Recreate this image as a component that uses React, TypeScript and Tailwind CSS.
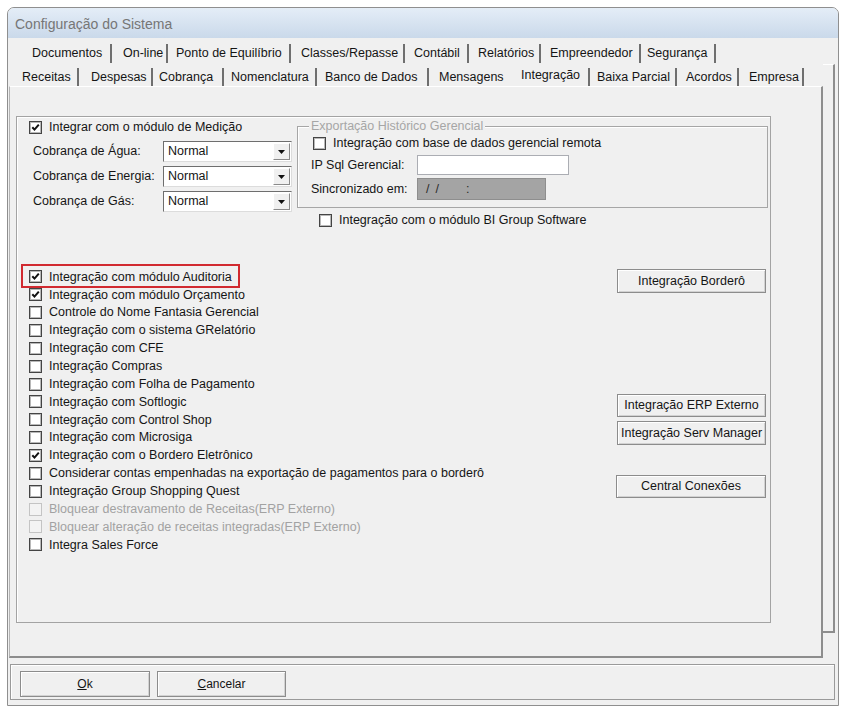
import clsx from 'clsx';

type Tab = { label: string; cls: string; sep?: boolean; active?: boolean };

const row1: Tab[] = [
  { label: 'Documentos', cls: 'w-[92px] pl-[12px]', sep: true },
  { label: 'On-line', cls: 'w-[56px] pl-[11px]', sep: true },
  { label: 'Ponto de Equilíbrio', cls: 'w-[123px] pl-[8px]', sep: true },
  { label: 'Classes/Repasse', cls: 'w-[114px] pl-[10px]', sep: true },
  { label: 'Contábil', cls: 'w-[64px] pl-[9px]', sep: true },
  { label: 'Relatórios', cls: 'w-[72px] pl-[9px]', sep: true },
  { label: 'Empreendedor', cls: 'w-[100px] pl-[9px]', sep: true },
  { label: 'Segurança', cls: 'w-[75px] pl-[6px]', sep: true },
];

const row2: Tab[] = [
  { label: 'Receitas', cls: 'w-[67px] pl-[10px]', sep: true },
  { label: 'Despesas', cls: 'w-[74px] pl-[12px]', sep: true },
  { label: 'Cobrança', cls: 'w-[71px] pl-[6px]', sep: true },
  { label: 'Nomenclatura', cls: 'w-[93px] pl-[7px]', sep: true },
  { label: 'Banco de Dados', cls: 'w-[112px] pl-[8px]', sep: true },
  { label: 'Mensagens', cls: 'w-[83px] pl-[10px]' },
  { label: 'Integração', cls: 'w-[78px] pl-[9px]', sep: true, active: true },
  { label: 'Baixa Parcial', cls: 'w-[87px] pl-[7px]', sep: true },
  { label: 'Acordos', cls: 'w-[62px] pl-[9px]', sep: true },
  { label: 'Empresa', cls: 'w-[65px] pl-[10px]', sep: true },
];

const options: { label: string; checked?: boolean; disabled?: boolean }[] = [
  { label: 'Integração com módulo Auditoria', checked: true },
  { label: 'Integração com módulo Orçamento', checked: true },
  { label: 'Controle do Nome Fantasia Gerencial' },
  { label: 'Integração com o sistema GRelatório' },
  { label: 'Integração com CFE' },
  { label: 'Integração Compras' },
  { label: 'Integração com Folha de Pagamento' },
  { label: 'Integração com Softlogic' },
  { label: 'Integração com Control Shop' },
  { label: 'Integração com Microsiga' },
  { label: 'Integração com o Bordero Eletrônico', checked: true },
  { label: 'Considerar contas empenhadas na exportação de pagamentos para o borderô' },
  { label: 'Integração Group Shopping Quest' },
  { label: 'Bloquear destravamento de Receitas(ERP Externo)', disabled: true },
  { label: 'Bloquear alteração de receitas integradas(ERP Externo)', disabled: true },
  { label: 'Integra Sales Force' },
];

function Box({ checked, disabled }: { checked?: boolean; disabled?: boolean }) {
  return (
    <span
      className={clsx(
        'flex h-[13px] w-[13px] shrink-0 items-center justify-center border',
        disabled
          ? 'border-[#c4c4c4] bg-[#f3f3f3]'
          : 'border-[#444] bg-white shadow-[inset_0_0_0_1px_#b8b8b8]'
      )}
    >
      {checked && (
        <svg viewBox="0 0 9 9" className="h-[9px] w-[9px]">
          <path d="M1.3 4.2 L3.5 6.6 L7.8 1.6" stroke="#111" strokeWidth="2" fill="none" />
        </svg>
      )}
    </span>
  );
}

function Check({ label, checked, disabled }: { label: string; checked?: boolean; disabled?: boolean }) {
  return (
    <div className="flex h-full items-center gap-[7px]">
      <Box checked={checked} disabled={disabled} />
      <span className={clsx('whitespace-nowrap', disabled ? 'text-[#a2a2a2]' : 'text-[#151515]')}>{label}</span>
    </div>
  );
}

function Combo({ label }: { label: string }) {
  return (
    <div className="flex h-[21px] items-center">
      <span className="ml-[4px] w-[130px] whitespace-nowrap text-[#151515]">{label}</span>
      <div className="flex h-[21px] w-[129px] items-center border border-t-[#6e6e6e] border-l-[#6e6e6e] border-r-[#dcdcdc] border-b-[#dcdcdc] bg-white">
        <span className="flex-1 pl-[4px] text-[#151515]">Normal</span>
        <span className="mr-[1px] flex h-[17px] w-[17px] items-center justify-center border border-t-white border-l-white border-r-[#8a8a8a] border-b-[#8a8a8a] bg-[#f0f0f0]">
          <svg viewBox="0 0 7 4" className="h-[4px] w-[7px]">
            <path d="M0 0 H7 L3.5 4 Z" fill="#111" />
          </svg>
        </span>
      </div>
    </div>
  );
}

function Btn({ children, cls }: { children: React.ReactNode; cls: string }) {
  return (
    <div
      className={clsx(
        'flex items-center overflow-hidden whitespace-nowrap border border-[#8c8c8c] bg-[#f0f0f0] text-[#151515] shadow-[inset_1px_1px_0_#ffffff,inset_-1px_-1px_0_#d2d2d2]',
        cls
      )}
    >
      {children}
    </div>
  );
}

function TabRow({ tabs, cls }: { tabs: Tab[]; cls: string }) {
  return (
    <div className={clsx('flex', cls)}>
      {tabs.map((t) => (
        <div key={t.label} className={clsx('flex shrink-0 items-center', t.cls)}>
          <span className={clsx('whitespace-nowrap text-[#151515]', t.active && '-mt-[4px]')}>{t.label}</span>
          {t.sep && <span className="ml-auto h-[19px] w-[2px] shrink-0 bg-[#6f6f6f]" />}
        </div>
      ))}
    </div>
  );
}

export default function App() {
  return (
    <div className="h-[710px] w-[849px] bg-white pl-[7px] pt-[7px] font-[family-name:'Liberation_Sans',Arial,sans-serif] text-[12.5px] leading-none">
      <div className="flex h-[699px] w-[832px] flex-col overflow-hidden rounded-t-[7px] border border-[#8f8f8f] bg-[#f0f0f0]">
        {/* title bar */}
        <div className="flex h-[30px] shrink-0 items-center bg-gradient-to-b from-[#e4edf7] to-[#cad9ea] pl-[7px] pt-[2px] text-[14px] text-[#767676]">
          Configuração do Sistema
        </div>

        <div className="flex">
          <div className="flex w-[815px] flex-col">
            <TabRow tabs={row1} cls="mt-[4px] h-[22px] pl-[12px]" />
            <TabRow tabs={row2} cls="h-[22px] pl-[4px] pt-[4px]" />

            {/* tab page */}
            <div className="ml-[1px] h-[572px] w-[814px] border-t border-l border-r-2 border-b-2 border-t-white border-l-[#b4b4b4] border-r-[#8d8d8d] border-b-[#8d8d8d] pl-[6px] pt-[29px]">
              <div className="h-[507px] w-[755px] border border-[#a3a3a3] shadow-[inset_1px_1px_0_#ffffff]">
                {/* top area */}
                <div className="flex h-[110px]">
                  <div className="w-[280px] pl-[12px]">
                    <div className="mt-[3px] h-[14px]">
                      <Check label="Integrar com o módulo de Medição" checked />
                    </div>
                    <div className="mt-[7px] flex flex-col gap-[4px]">
                      <Combo label="Cobrança de Água:" />
                      <Combo label="Cobrança de Energia:" />
                      <Combo label="Cobrança de Gás:" />
                    </div>
                  </div>
                  <div className="flex flex-col">
                    <div className="relative mt-[9px] h-[82px] w-[471px] border border-[#a6a6a6] pl-[13px] pt-[10px] shadow-[inset_1px_1px_0_#ffffff]">
                      <span className="absolute -top-[7px] left-[11px] bg-[#f0f0f0] px-[2px] text-[#a6a6a6]">
                        Exportação Histórico Gerencial
                      </span>
                      <div className="ml-[2px] h-[13px]">
                        <Check label="Integração com base de dados gerencial remota" />
                      </div>
                      <div className="mt-[5px] flex h-[20px] items-center">
                        <span className="w-[106px] text-[#151515]">IP Sql Gerencial:</span>
                        <div className="h-[20px] w-[152px] border border-[#abadb3] bg-white" />
                      </div>
                      <div className="mt-[3px] flex h-[22px] items-center">
                        <span className="w-[106px] text-[#151515]">Sincronizado em:</span>
                        <div className="flex h-[22px] w-[129px] items-center border border-[#8e8e8e] bg-[#a4a4a4] pl-[8px] text-[#2a2a2a]">
                          <span>/</span>
                          <span className="ml-[6px]">/</span>
                          <span className="ml-[27px]">:</span>
                        </div>
                      </div>
                    </div>
                    <div className="mt-[6px] h-[13px] pl-[22px]">
                      <Check label="Integração com o módulo BI Group Software" />
                    </div>
                  </div>
                </div>

                {/* options + side buttons */}
                <div className="mt-[37px] flex">
                  <div className="relative w-[600px] pl-[12px] pt-[4px]">
                    <div className="absolute left-[4px] top-0 h-[24px] w-[219px] border-2 border-[#d12a30]" />
                    {options.map((o) => (
                      <div key={o.label} className="h-[17.87px]">
                        <Check label={o.label} checked={o.checked} disabled={o.disabled} />
                      </div>
                    ))}
                  </div>
                  <div className="flex w-[149px] flex-col">
                    <Btn cls="mt-[5px] h-[24px] justify-center">Integração Borderô</Btn>
                    <Btn cls="mt-[101px] h-[23px] justify-center">Integração ERP Externo</Btn>
                    <Btn cls="mt-[4px] h-[24px] justify-start pl-[3px]">Integração Serv Manager</Btn>
                    <Btn cls="-ml-[1px] mt-[30px] h-[23px] justify-center">Central Conexões</Btn>
                  </div>
                </div>
              </div>
            </div>
          </div>

          {/* right strip of the tab control */}
          <div className="mt-[26px] h-[569px] w-[12px] border-t border-r-2 border-b-2 border-t-white border-r-[#8d8d8d] border-b-[#8d8d8d]" />
        </div>

        {/* bottom button bar */}
        <div className="ml-[2px] mt-[6px] flex h-[36px] w-[825px] items-start gap-[7px] border border-[#9a9a9a] pl-[9px] pt-[6px] shadow-[inset_1px_1px_0_#ffffff]">
          <Btn cls="h-[26px] w-[130px] justify-center text-[12px]">
            <span>
              <span className="underline">O</span>k
            </span>
          </Btn>
          <Btn cls="h-[26px] w-[129px] justify-center text-[12px]">
            <span>
              <span className="underline">C</span>ancelar
            </span>
          </Btn>
        </div>
      </div>
    </div>
  );
}
